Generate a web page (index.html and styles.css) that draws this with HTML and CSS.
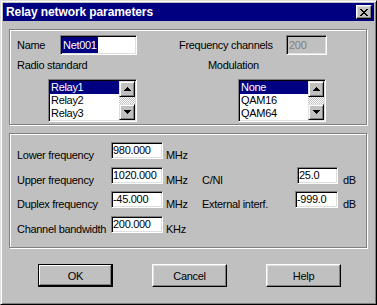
FILE: index.html
```html
<!DOCTYPE html>
<html lang="en">
<head>
<meta charset="UTF-8">
<title>Relay network parameters</title>
<link rel="stylesheet" href="styles.css">
</head>
<body>
<div class="window">
  <div class="titlebar">
    <span class="title">Relay network parameters</span>
    <span class="close-btn">
      <svg width="8" height="7" viewBox="0 0 8 7"><path d="M0 0h2v1H0zM6 0h2v1H6zM1 1h2v1H1zM5 1h2v1H5zM2 2h4v1H2zM3 3h2v1H3zM2 4h4v1H2zM1 5h2v1H1zM5 5h2v1H5zM0 6h2v1H0zM6 6h2v1H6z" fill="#000"/></svg>
    </span>
  </div>

  <div class="content">
    <div class="group group-top">
      <div class="row row-name">
        <span class="lbl lbl-name">Name</span>
        <div class="field field-name"><span class="sel">Net001</span></div>
        <span class="lbl lbl-channels">Frequency channels</span>
        <div class="field field-disabled">200</div>
      </div>
      <div class="row row-captions">
        <span class="caption caption-radio">Radio standard</span>
        <span class="caption">Modulation</span>
      </div>
      <div class="row row-lists">
        <div class="listbox list-radio">
          <ul class="items">
            <li class="selected">Relay1</li>
            <li>Relay2</li>
            <li>Relay3</li>
          </ul>
          <div class="scrollbar">
            <span class="sb-btn"><svg width="7" height="4" viewBox="0 0 7 4"><path d="M3 0h1v1H3zM2 1h3v1H2zM1 2h5v1H1zM0 3h7v1H0z" fill="#000"/></svg></span>
            <span class="sb-track"></span>
            <span class="sb-btn"><svg width="7" height="4" viewBox="0 0 7 4"><path d="M0 0h7v1H0zM1 1h5v1H1zM2 2h3v1H2zM3 3h1v1H3z" fill="#000"/></svg></span>
          </div>
        </div>
        <div class="listbox list-mod">
          <ul class="items">
            <li class="selected">None</li>
            <li>QAM16</li>
            <li>QAM64</li>
          </ul>
          <div class="scrollbar">
            <span class="sb-btn"><svg width="7" height="4" viewBox="0 0 7 4"><path d="M3 0h1v1H3zM2 1h3v1H2zM1 2h5v1H1zM0 3h7v1H0z" fill="#000"/></svg></span>
            <span class="sb-track"></span>
            <span class="sb-btn"><svg width="7" height="4" viewBox="0 0 7 4"><path d="M0 0h7v1H0zM1 1h5v1H1zM2 2h3v1H2zM3 3h1v1H3z" fill="#000"/></svg></span>
          </div>
        </div>
      </div>
    </div>

    <div class="group group-freq">
      <div class="freq-grid">
        <span class="lbl first">Lower frequency</span>
        <div class="field field-sm">980.000</div>
        <span class="lbl unit">MHz</span>

        <span class="lbl first">Upper frequency</span>
        <div class="field field-sm">1020.000</div>
        <span class="lbl unit">MHz</span>
        <span class="lbl">C/NI</span>
        <div class="field field-sm field-cni">25.0</div>
        <span class="lbl unit-db">dB</span>

        <span class="lbl first">Duplex frequency</span>
        <div class="field field-sm">-45.000</div>
        <span class="lbl unit">MHz</span>
        <span class="lbl">External interf.</span>
        <div class="field field-sm field-ext">-999.0</div>
        <span class="lbl unit-db">dB</span>

        <span class="lbl first">Channel bandwidth</span>
        <div class="field field-sm">200.000</div>
        <span class="lbl unit">KHz</span>
      </div>
    </div>

    <div class="buttons">
      <button class="btn btn-default">OK</button>
      <button class="btn">Cancel</button>
      <button class="btn">Help</button>
    </div>
  </div>
</div>
</body>
</html>
```

FILE: styles.css
```css
/* Win95 style dialog */
body {
  margin: 0;
  background: #c0c0c0;
  font-family: "Liberation Sans", Arial, sans-serif;
  font-size: 11px;
  letter-spacing: -0.3px;
  color: #000;
}
.window {
  width: 377px;
  height: 305px;
  box-sizing: border-box;
  border: 1px solid;
  border-color: #dfdfdf #000 #000 #dfdfdf;
  box-shadow: inset 1px 1px #fff, inset -1px -1px #808080;
  padding: 2px;
  background: #c0c0c0;
}
.titlebar {
  height: 18px;
  background: #000080;
  color: #fff;
  display: flex;
  align-items: center;
  justify-content: space-between;
  padding-left: 3px;
  font-size: 12px;
  font-weight: bold;
  letter-spacing: -0.1px;
}
.close-btn {
  width: 16px;
  height: 14px;
  box-sizing: border-box;
  margin-right: 2px;
  border: 1px solid;
  border-color: #fff #000 #000 #fff;
  box-shadow: inset -1px -1px #808080, inset 1px 1px #dfdfdf;
  background: #c0c0c0;
  display: flex;
  align-items: center;
  justify-content: center;
}
.content {
  padding: 8px 7px 0 6px;
}

/* etched group boxes */
.group {
  box-sizing: border-box;
  border: 1px solid #808080;
  box-shadow: inset 1px 1px #fff, 1px 1px #fff;
}
.group-top {
  height: 96px;
  padding: 5px 0 0 7px;
}
.group-freq {
  height: 115px;
  margin-top: 8px;
  padding: 8px 0 0 7px;
}
.row {
  display: flex;
  align-items: flex-start;
}
.lbl, .caption {
  line-height: 13px;
  white-space: nowrap;
}
.row-name {
  height: 20px;
}
.lbl-name {
  width: 43px;
  padding-top: 4px;
}
.lbl-channels {
  width: 107px;
  margin-left: 42px;
  padding-top: 4px;
}
.row-captions {
  margin-top: 4px;
}
.caption-radio {
  width: 191px;
}
.row-lists {
  margin-top: 7px;
}

/* sunken fields */
.field {
  box-sizing: border-box;
  border: 1px solid;
  border-color: #808080 #fff #fff #808080;
  box-shadow: inset 1px 1px #000, inset -1px -1px #dfdfdf;
  background: #fff;
  padding: 1px;
  white-space: nowrap;
  overflow: hidden;
}
.field-name {
  width: 77px;
  height: 20px;
}
.sel {
  display: inline-block;
  line-height: 16px;
  padding: 0 1px;
  background: #000080;
  color: #fff;
}
.field-disabled {
  width: 41px;
  height: 20px;
  background: #c0c0c0;
  color: #808080;
  line-height: 16px;
  padding-left: 2px;
}

/* list boxes */
.listbox {
  display: flex;
  width: 89px;
  height: 43px;
  box-sizing: border-box;
  border: 1px solid;
  border-color: #808080 #fff #fff #808080;
  box-shadow: inset 1px 1px #000, inset -1px -1px #dfdfdf;
  background: #fff;
  padding: 1px;
}
.list-radio {
  margin-left: 31px;
}
.list-mod {
  width: 88px;
  margin-left: 101px;
}
.items {
  list-style: none;
  margin: 0;
  padding: 0;
  flex: 1;
}
.items li {
  height: 13px;
  line-height: 13px;
  padding-left: 1px;
}
.items li.selected {
  background: #000080;
  color: #fff;
}
.scrollbar {
  width: 16px;
  display: flex;
  flex-direction: column;
}
.sb-btn {
  height: 16px;
  box-sizing: border-box;
  border: 1px solid;
  border-color: #dfdfdf #000 #000 #dfdfdf;
  box-shadow: inset 1px 1px #fff, inset -1px -1px #808080;
  background: #c0c0c0;
  display: flex;
  align-items: center;
  justify-content: center;
}
.sb-track {
  flex: 1;
  background: repeating-conic-gradient(#c0c0c0 0 25%, #fff 0 50%) 0 0 / 2px 2px;
}

/* frequency grid */
.freq-grid {
  display: grid;
  grid-template-columns: 94px 52px 39px 93px 43px auto;
  grid-template-rows: 25px 24px 25px 17px;
  align-items: start;
}
.freq-grid .lbl {
  padding-top: 7px;
}
.freq-grid .first {
  grid-column: 1;
}
.unit {
  padding-left: 3px;
}
.unit-db {
  padding-left: 5px;
}
.field-sm {
  width: 52px;
  height: 17px;
  line-height: 13px;
}
.field-cni {
  width: 41px;
  justify-self: end;
}
.field-ext {
  width: 43px;
}

/* buttons */
.buttons {
  display: flex;
  gap: 39px;
  margin-top: 16px;
  padding-left: 29px;
}
.btn {
  width: 75px;
  height: 23px;
  box-sizing: border-box;
  padding: 0;
  border: 1px solid;
  border-color: #fff #000 #000 #fff;
  box-shadow: inset -1px -1px #808080, inset 1px 1px #dfdfdf;
  background: #c0c0c0;
  font-family: inherit;
  font-size: 11px;
  letter-spacing: -0.3px;
  color: #000;
}
.btn-default {
  border-color: #000;
  box-shadow: inset -1px -1px #000, inset 1px 1px #fff, inset -2px -2px #808080;
}
```
